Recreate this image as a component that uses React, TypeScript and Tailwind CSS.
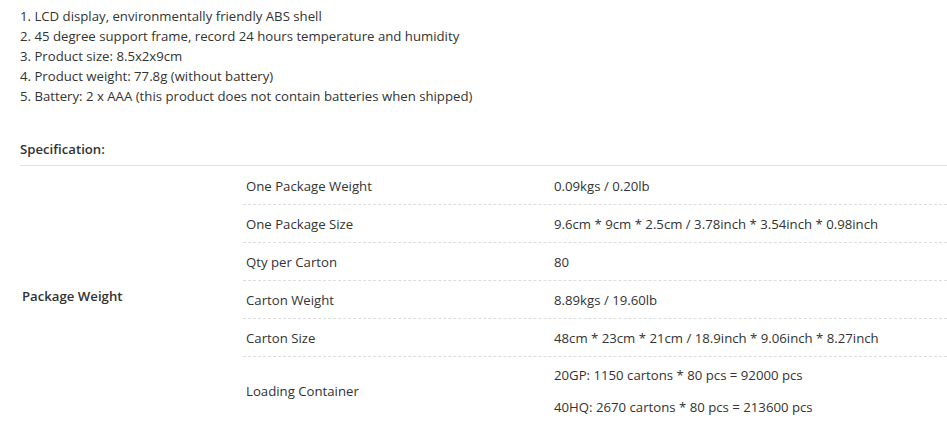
import React from "react";

const features = [
	"1. LCD display, environmentally friendly ABS shell",
	"2. 45 degree support frame, record 24 hours temperature and humidity",
	"3. Product size: 8.5x2x9cm",
	"4. Product weight: 77.8g (without battery)",
	"5. Battery: 2 x AAA (this product does not contain batteries when shipped)",
];

const specs: { label: string; values: string[] }[] = [
	{ label: "One Package Weight", values: ["0.09kgs / 0.20lb"] },
	{ label: "One Package Size", values: ["9.6cm * 9cm * 2.5cm / 3.78inch * 3.54inch * 0.98inch"] },
	{ label: "Qty per Carton", values: ["80"] },
	{ label: "Carton Weight", values: ["8.89kgs / 19.60lb"] },
	{ label: "Carton Size", values: ["48cm * 23cm * 21cm / 18.9inch * 9.06inch * 8.27inch"] },
	{
		label: "Loading Container",
		values: ["20GP: 1150 cartons * 80 pcs = 92000 pcs", "40HQ: 2670 cartons * 80 pcs = 213600 pcs"],
	},
];

const App: React.FC = () => {
	return (
		<div className="min-h-screen bg-white pl-5 text-[13.2px] leading-5 text-[#333] font-['Open_Sans',sans-serif]">
			<ul className="pt-[6px]">
				{features.map((f) => (
					<li key={f}>{f}</li>
				))}
			</ul>

			<h3 className="mt-[33px] pb-[6px] font-semibold border-b border-[#e2e2e2]">Specification:</h3>

			<div className="flex">
				<div className="w-[223px] flex items-center pl-[2px] font-semibold">Package Weight</div>
				<div className="flex-1 pt-[1px]">
					{specs.map((row, i) => (
						<div
							key={row.label}
							className={`flex items-center border-dashed border-[#dddddd] ${
								i < specs.length - 1 ? "border-b" : ""
							} ${row.values.length > 1 ? "py-2" : "h-[38px]"}`}>
							<div className="w-[308px] pl-[3px]">{row.label}</div>
							<div className="flex-1 pl-[3px] flex flex-col gap-3">
								{row.values.map((v) => (
									<span key={v}>{v}</span>
								))}
							</div>
						</div>
					))}
				</div>
			</div>
		</div>
	);
};

export default App;
